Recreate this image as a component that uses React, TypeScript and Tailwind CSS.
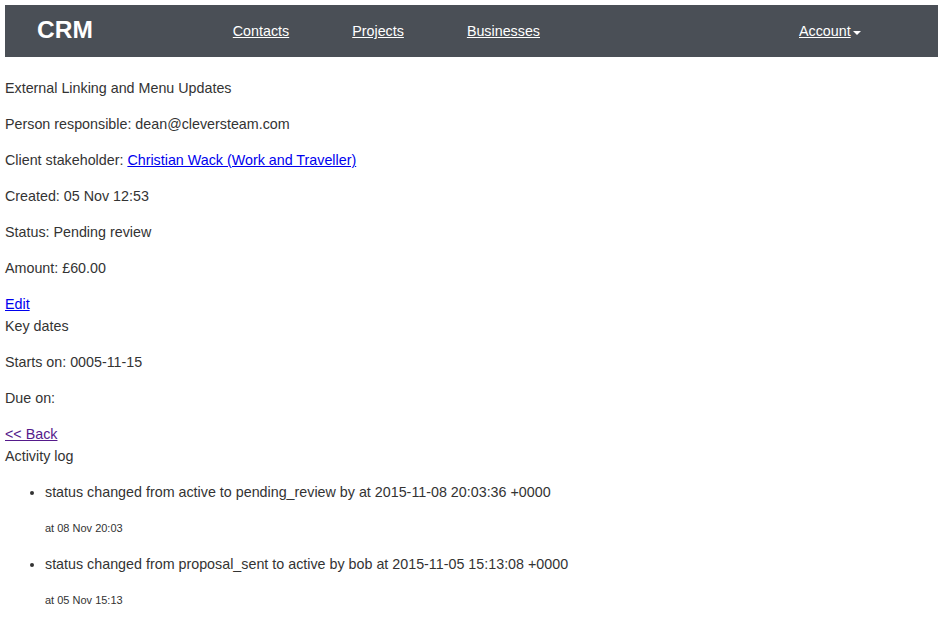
export default function App() {
  const font = { fontFamily: '"Liberation Sans", Arial, sans-serif' };
  return (
    <div className="min-h-[640px] bg-white pt-[5px] pl-[5px] text-[14.3px] text-[#333333]" style={font}>
      <nav className="flex h-[52px] items-center bg-[#4a4f56] text-white">
        <span className="ml-[32px] mb-[1px] text-[24.5px] font-bold leading-none">CRM</span>
        <a href="#" className="ml-[140px] pt-[2px] underline">Contacts</a>
        <a href="#" className="ml-[63px] pt-[2px] underline">Projects</a>
        <a href="#" className="ml-[63px] pt-[2px] underline">Businesses</a>
        <a href="#" className="ml-[259px] flex items-center pt-[2px]">
          <span className="underline">Account</span>
          <span className="ml-[2px] mt-[1px] h-0 w-0 border-x-[4px] border-t-[4px] border-x-transparent border-t-white"></span>
        </a>
      </nav>
      <div className="pt-[6px] leading-[22px]">
        <p className="my-[14px]">External Linking and Menu Updates</p>
        <p className="my-[14px]">Person responsible: dean@cleversteam.com</p>
        <p className="my-[14px]">
          Client stakeholder: <a href="#" className="text-[#0000ee] underline">Christian Wack (Work and Traveller)</a>
        </p>
        <p className="my-[14px]">Created: 05 Nov 12:53</p>
        <p className="my-[14px]">Status: Pending review</p>
        <p className="my-[14px]">Amount: £60.00</p>
        <a href="#" className="text-[#0000ee] underline">Edit</a>
        <div>Key dates</div>
        <p className="my-[14px]">Starts on: 0005-11-15</p>
        <p className="my-[14px]">Due on: </p>
        <a href="#" className="text-[#551a8b] underline">&lt;&lt; Back</a>
        <div>Activity log</div>
        <ul className="my-[14px] list-disc pl-[40px]">
          <li>
            status changed from active to pending_review by at 2015-11-08 20:03:36 +0000
            <p className="my-[14px] text-[11px]">at 08 Nov 20:03</p>
          </li>
          <li>
            status changed from proposal_sent to active by bob at 2015-11-05 15:13:08 +0000
            <p className="my-[14px] text-[11px]">at 05 Nov 15:13</p>
          </li>
        </ul>
      </div>
    </div>
  );
}
